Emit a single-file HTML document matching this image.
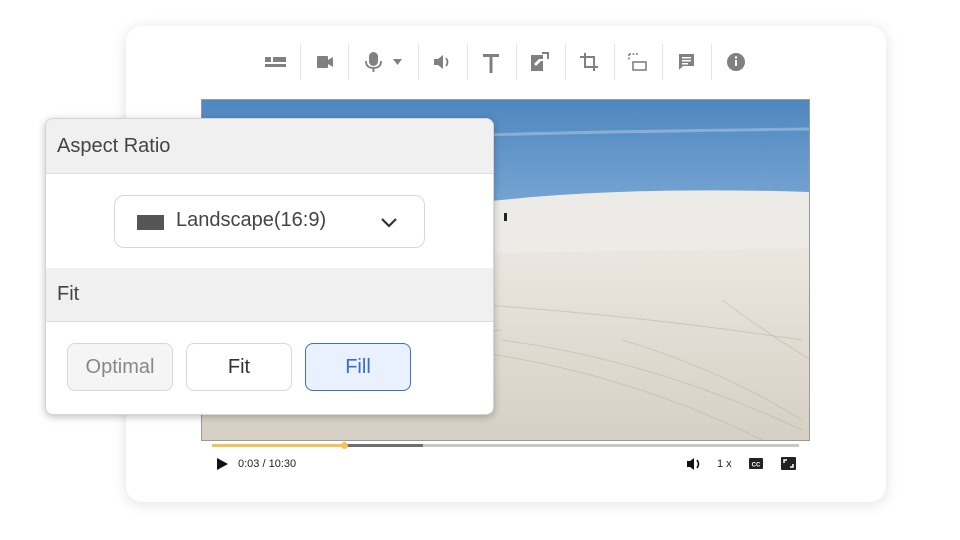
<!DOCTYPE html>
<html><head><meta charset="utf-8"><style>
*{margin:0;padding:0;box-sizing:border-box}
body{width:960px;height:540px;background:#fff;position:relative;overflow:hidden;font-family:"Liberation Sans",sans-serif}
.card{position:absolute;left:126px;top:26px;width:760px;height:476px;background:#fff;border-radius:16px;box-shadow:0 2px 14px rgba(0,0,0,0.12)}
.sep{position:absolute;top:44px;width:1px;height:36px;background:#e4e4e4}
.video{position:absolute;left:201px;top:99px;width:609px;height:342px;border:1px solid #9a9a9a;overflow:hidden}
.panel{position:absolute;left:45px;top:118px;width:449px;height:297px;background:#fff;border:1px solid #d5d5d5;border-radius:8px;box-shadow:0 2px 8px rgba(0,0,0,0.25);overflow:hidden}
.hd{position:absolute;left:0;width:100%;background:#f0f0f0;border-bottom:1px solid #ddd;font-size:20px;color:#444;padding-left:11px}
.btn{position:absolute;top:224px;width:106px;height:48px;border-radius:8px;border:1px solid #d8d8d8;font-size:20px;text-align:center;line-height:46px}
.ctl{position:absolute;font-size:11px;color:#222}
</style></head><body>
<div class="card"></div>
<svg style="position:absolute;left:0;top:0" width="960" height="110">
<g fill="#808080">
<rect x="265" y="57" width="6" height="5"/><rect x="273" y="57" width="13" height="5"/><rect x="265" y="64" width="21" height="3"/>
<rect x="317" y="56" width="11" height="12" rx="1"/><path d="M328 60l5-3v10l-5-3z"/>
<rect x="369" y="52" width="9" height="14" rx="4.5"/><path d="M366 61q0 7 7.5 7q7.5 0 7.5-7" fill="none" stroke="#808080" stroke-width="1.8"/><rect x="372.5" y="67" width="2" height="5"/>
<path d="M393 59h9l-4.5 6z"/>
<path d="M434 59h4l5-4v14l-5-4h-4z"/><path d="M446 58q3 4 0 8" fill="none" stroke="#808080" stroke-width="1.8"/>
<path d="M483 54h16v3h-6.5v16h-3v-16h-6.5z"/>
<path d="M531 55h12v4l-4 0l-5 5l2 2l5-5v-0h2v10h-12z"/><path d="M542 53h6v6" fill="none" stroke="#808080" stroke-width="2"/>
<path d="M585 53v14h13M580 57h14v14" fill="none" stroke="#808080" stroke-width="2"/>
<rect x="633" y="62" width="13" height="8" fill="none" stroke="#808080" stroke-width="1.6"/>
<path d="M629 54h9M629 54v7" fill="none" stroke="#808080" stroke-width="1.6" stroke-dasharray="2 1.5"/>
<path d="M679 54h15v12h-11l-4 4z"/><rect x="682" y="57" width="9" height="1.5" fill="#fff"/><rect x="682" y="60" width="9" height="1.5" fill="#fff"/><rect x="682" y="63" width="6" height="1.5" fill="#fff"/>
<circle cx="736" cy="62" r="9"/><rect x="735" y="60" width="2" height="6" fill="#fff"/><circle cx="736" cy="57.5" r="1.2" fill="#fff"/>
</g></svg>
<div class="sep" style="left:300px"></div><div class="sep" style="left:348px"></div><div class="sep" style="left:418px"></div><div class="sep" style="left:467px"></div><div class="sep" style="left:516px"></div><div class="sep" style="left:565px"></div><div class="sep" style="left:614px"></div><div class="sep" style="left:662px"></div><div class="sep" style="left:711px"></div>
<div class="video">
<svg width="609" height="342" viewBox="0 0 609 342">
<defs><linearGradient id="sky" x1="0" y1="0" x2="0" y2="1"><stop offset="0" stop-color="#4f87bf"/><stop offset="1" stop-color="#80acd8"/></linearGradient>
<linearGradient id="gr" x1="0" y1="0" x2="0" y2="1"><stop offset="0" stop-color="#ebe7e0"/><stop offset="1" stop-color="#d6cfc4"/></linearGradient></defs>
<rect width="609" height="130" fill="url(#sky)"/>
<path d="M280 35q150-4 329-6" stroke="#b7cde4" stroke-width="3" fill="none" opacity="0.5"/>
<path d="M0 125q200-15 330-28q120-10 279-5v250h-609z" fill="#ecebe8"/>
<path d="M0 160q300-8 609-12v194h-609z" fill="url(#gr)"/>
<g stroke="#b9b0a2" stroke-width="1" fill="none" opacity="0.5">
<path d="M300 240q150 20 300 90"/><path d="M260 250q160 20 300 90"/><path d="M420 240q100 30 180 80"/><path d="M0 270q100-20 300-40"/><path d="M520 200q40 30 89 60"/><path d="M200 200q200 10 400 40"/>
</g>
<rect x="302" y="113" width="3" height="8" fill="#222"/>
</svg></div>
<div style="position:absolute;left:212px;top:444px;width:587px;height:3px;background:#c8c8c8"></div>
<div style="position:absolute;left:212px;top:444px;width:211px;height:3px;background:#6e6e6e"></div>
<div style="position:absolute;left:212px;top:444px;width:133px;height:3px;background:#f0c458"></div>
<div style="position:absolute;left:341px;top:442px;width:7px;height:7px;border-radius:50%;background:#f0c458"></div>
<svg style="position:absolute;left:0;top:450px" width="960" height="30">
<path d="M217 8l11 6l-11 6z" fill="#111"/>
<path d="M687 11h3l4-3v12l-4-3h-3z" fill="#111"/><path d="M697 10q3 4 0 8" stroke="#111" stroke-width="1.6" fill="none"/>
<rect x="749" y="8" width="14" height="11" rx="1" fill="#222"/><text x="756" y="16.5" font-size="6" fill="#fff" text-anchor="middle" font-family="Liberation Sans" font-weight="bold">CC</text>
<rect x="781" y="7" width="15" height="13" rx="1" fill="#222"/><path d="M784 13v-3h3M793 14v3h-3" stroke="#fff" stroke-width="1.5" fill="none"/>
</svg>
<div class="ctl" style="left:238px;top:458px">0:03 / 10:30</div>
<div class="ctl" style="left:717px;top:458px">1 x</div>
<div class="panel">
<div class="hd" style="top:0;height:55px;line-height:54px">Aspect Ratio</div>
<div style="position:absolute;left:68px;top:76px;width:311px;height:53px;border:1px solid #d8d8d8;border-radius:10px">
<div style="position:absolute;left:22px;top:19px;width:27px;height:15px;background:#555"></div>
<div style="position:absolute;left:61px;top:13px;font-size:20px;color:#444">Landscape(16:9)</div>
<svg style="position:absolute;left:265px;top:19px" width="18" height="14"><path d="M2 4l7 7l7-7" stroke="#333" stroke-width="2.2" fill="none"/></svg>
</div>
<div class="hd" style="top:149px;height:54px;line-height:52px">Fit</div>
<div class="btn" style="left:21px;background:#f5f5f5;color:#888">Optimal</div>
<div class="btn" style="left:140px;background:#fff;color:#333">Fit</div>
<div class="btn" style="left:259px;background:#e8f1fd;color:#3a6cc8;border-color:#3f6fc7">Fill</div>
</div>
</body></html>
